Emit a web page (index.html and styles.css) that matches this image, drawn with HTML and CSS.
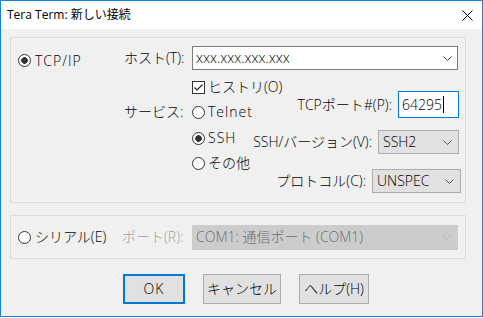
FILE: index.html
```html
<!DOCTYPE html>
<html lang="ja">
<head>
    <meta charset="UTF-8">
    <title>Tera Term: 新しい接続</title>
    <link rel="stylesheet" href="styles.css">
</head>
<body>
    <div class="window">
        <div class="titlebar">
            <span class="title">Tera Term: 新しい接続</span>
            <svg class="close" width="11" height="11" viewBox="0 0 11 11">
                <path d="M0.5 0.5 L10.5 10.5 M10.5 0.5 L0.5 10.5" stroke="#000" stroke-width="1" fill="none"/>
            </svg>
        </div>

        <div class="client">
            <div class="group group-tcp">
                <div class="row-host">
                    <div class="opt opt-tcp">
                        <span class="radio on"></span>
                        <span class="lat">TCP/IP</span>
                    </div>
                    <span class="label">ホスト(T):</span>
                    <div class="combo host">
                        <span class="value">xxx.xxx.xxx.xxx</span>
                        <svg class="chev" width="9" height="5" viewBox="0 0 9 5"><polyline points="0.5,0.5 4.5,4.5 8.5,0.5" fill="none" stroke="#444"/></svg>
                    </div>
                </div>

                <div class="row-service">
                    <div class="service-left">
                        <span></span>
                        <div class="opt-small">
                            <span class="checkbox">
                                <svg width="11" height="11" viewBox="0 0 11 11"><polyline points="1.5,5.5 4,8 9.5,2.5" fill="none" stroke="#222" stroke-width="1.2"/></svg>
                            </span>
                            <span>ヒストリ(O)</span>
                        </div>

                        <span class="label">サービス:</span>
                        <div class="opt-small">
                            <span class="radio"></span>
                            <span class="lat">Telnet</span>
                        </div>

                        <span></span>
                        <div class="opt-small">
                            <span class="radio on"></span>
                            <span class="lat">SSH</span>
                        </div>

                        <span></span>
                        <div class="opt-small">
                            <span class="radio"></span>
                            <span>その他</span>
                        </div>
                    </div>

                    <div class="service-right">
                        <div class="field">
                            <span>TCPポート#(P):</span>
                            <div class="edit">64295<span class="caret"></span></div>
                        </div>
                        <div class="field field-ver">
                            <span>SSH/バージョン(V):</span>
                            <div class="select ver">
                                <span>SSH2</span>
                                <svg class="chev" width="9" height="5" viewBox="0 0 9 5"><polyline points="0.5,0.5 4.5,4.5 8.5,0.5" fill="none" stroke="#555"/></svg>
                            </div>
                        </div>
                        <div class="field field-proto">
                            <span>プロトコル(C):</span>
                            <div class="select proto">
                                <span>UNSPEC</span>
                                <svg class="chev" width="9" height="5" viewBox="0 0 9 5"><polyline points="0.5,0.5 4.5,4.5 8.5,0.5" fill="none" stroke="#555"/></svg>
                            </div>
                        </div>
                    </div>
                </div>
            </div>

            <div class="group group-serial">
                <div class="opt serial-opt">
                    <span class="radio"></span>
                    <span>シリアル(E)</span>
                </div>
                <span class="label disabled">ポート(R):</span>
                <div class="select com">
                    <span>COM1: 通信ポート (COM1)</span>
                    <svg class="chev" width="9" height="5" viewBox="0 0 9 5"><polyline points="0.5,0.5 4.5,4.5 8.5,0.5" fill="none" stroke="#b4b4b4"/></svg>
                </div>
            </div>

            <div class="buttons">
                <div class="btn btn-ok">OK</div>
                <div class="btn btn-cancel">キャンセル</div>
                <div class="btn btn-help">ヘルプ(H)</div>
            </div>
        </div>
    </div>
</body>
</html>
```

FILE: styles.css
```css
body {
    margin: 0;
    background-color: #ffffff;
    font-family: "Open Sans", "Noto Sans CJK JP", sans-serif;
    font-size: 14px;
    font-weight: 300;
    line-height: 16px;
    color: #000000;
}
.window {
    width: 483px;
    height: 317px;
    box-sizing: border-box;
    border: 1px solid #1883d7;
    display: flex;
    flex-direction: column;
}
.titlebar {
    height: 28px;
    flex-shrink: 0;
    background-color: #ffffff;
    display: flex;
    align-items: center;
    padding: 0 9px 0 6px;
    font-size: 12px;
    font-weight: 400;
}
.title {
    flex-grow: 1;
}
.client {
    flex-grow: 1;
    background-color: #f0f0f0;
    padding: 8px 16px 0 9px;
}
.group {
    border: 1px solid #dcdcdc;
    box-sizing: border-box;
    padding-left: 7px;
    padding-right: 6px;
}
.group-tcp {
    height: 166px;
    padding-top: 8px;
}
.lat {
    letter-spacing: 1px;
}
.row-host {
    display: flex;
    align-items: center;
    height: 24px;
}
.opt {
    width: 106px;
    display: flex;
    align-items: center;
    gap: 4px;
}
.opt-tcp {
    margin-top: 5px;
}
.opt-small {
    display: flex;
    align-items: center;
    gap: 3px;
    white-space: nowrap;
}
.label {
    width: 68px;
    white-space: nowrap;
}
.radio {
    width: 13px;
    height: 13px;
    box-sizing: border-box;
    border: 1px solid #333333;
    border-radius: 50%;
    background-color: #ffffff;
    flex-shrink: 0;
}
.radio.on {
    background: radial-gradient(circle, #333333 0 3px, #ffffff 3.6px);
}
.checkbox {
    width: 13px;
    height: 13px;
    box-sizing: border-box;
    border: 1px solid #333333;
    background-color: #ffffff;
    display: flex;
    align-items: center;
    justify-content: center;
    flex-shrink: 0;
}
.combo {
    box-sizing: border-box;
    height: 24px;
    border: 1px solid #7a7a7a;
    background-color: #ffffff;
    display: flex;
    align-items: center;
    padding: 0 5px 0 3px;
}
.combo .value,
.select span {
    flex-grow: 1;
    white-space: nowrap;
}
.host {
    width: 266px;
}
/* left options and right fields share one cell, the fields sit on the right */
.row-service {
    display: grid;
    padding-left: 106px;
}
.service-left {
    grid-area: 1 / 1;
    justify-self: start;
    display: grid;
    grid-template-columns: 68px auto;
    grid-template-rows: 24px 26px 26px 24px;
    align-items: center;
    margin-top: 5px;
}
.service-right {
    grid-area: 1 / 1;
    justify-self: end;
    align-self: start;
    display: flex;
    flex-direction: column;
    align-items: flex-end;
    margin-top: 21px;
}
.field {
    display: flex;
    align-items: center;
    gap: 6px;
    white-space: nowrap;
}
.field-ver {
    margin-top: 12px;
}
.field-proto {
    margin-top: 15px;
    margin-right: -2px;
}
.edit {
    width: 61px;
    height: 27px;
    box-sizing: border-box;
    border: 1px solid #0078d7;
    background-color: #ffffff;
    padding-left: 3px;
    display: flex;
    align-items: center;
}
.caret {
    display: inline-block;
    width: 1px;
    height: 17px;
    background-color: #000000;
    margin-left: 1px;
}
.select {
    height: 24px;
    box-sizing: border-box;
    border: 1px solid #adadad;
    background-color: #e1e1e1;
    display: flex;
    align-items: center;
    padding: 0 6px 0 4px;
}
.ver {
    width: 81px;
}
.proto {
    width: 89px;
}
.group-serial {
    margin-top: 12px;
    height: 44px;
    display: flex;
    align-items: center;
}
.serial-opt {
    width: 104px;
}
.group-serial .label {
    width: 70px;
}
.disabled {
    color: #a0a0a0;
}
.com {
    width: 266px;
    height: 25px;
    background-color: #cccccc;
    border-color: #cccccc;
    color: #6d6d6d;
    padding-left: 3px;
}
.buttons {
    display: flex;
    gap: 18px;
    margin-top: 15px;
    padding-left: 113px;
}
.btn {
    height: 30px;
    box-sizing: border-box;
    border: 1px solid #adadad;
    background-color: #e1e1e1;
    display: flex;
    align-items: center;
    justify-content: center;
    white-space: nowrap;
}
.btn-ok {
    width: 62px;
    border: 2px solid #0078d7;
    letter-spacing: 1px;
}
.btn-cancel {
    width: 78px;
}
.btn-help {
    width: 70px;
}
```
